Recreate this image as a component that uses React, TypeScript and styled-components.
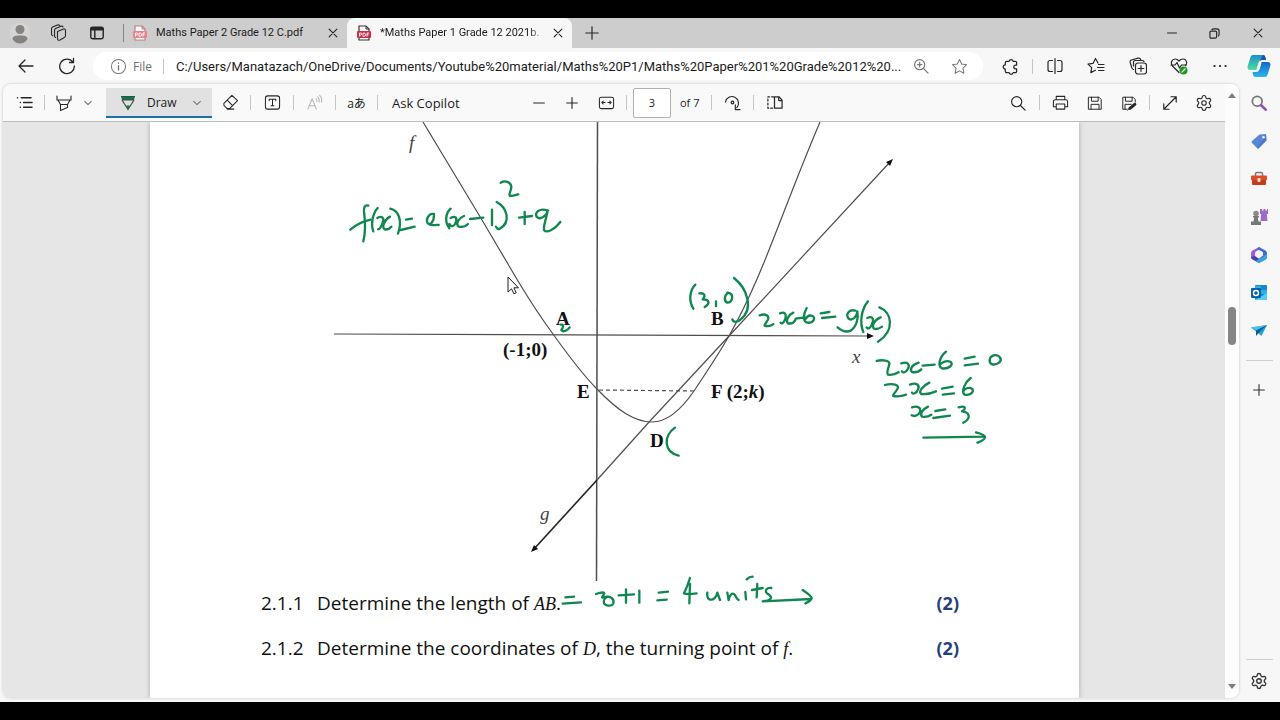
import React from 'react';
import styled, { createGlobalStyle, css } from 'styled-components';
import { Settings } from 'lucide-react';

const ui = '"Open Sans", "Noto Sans", "Noto Sans CJK JP", sans-serif';
const compact = 'Roboto, "Open Sans", sans-serif';
const serif = '"Liberation Serif", "Times New Roman", serif';

const GlobalStyle = createGlobalStyle`
  * { box-sizing: border-box; }
  body { margin: 0; background: #000; font-family: ${ui}; color: #1b1b1b; }
  button, input { font: inherit; color: inherit; }
`;

const Screen = styled.div`
  display: flex;
  flex-direction: column;
  height: 100vh;
  min-height: 480px;
  padding: 18px 0;
  background: #000;
  overflow: hidden;
`;

const TabStrip = styled.header`
  display: flex;
  flex: none;
  height: 30px;
  background: #cdcdcd;
`;

const IconButton = styled.button<{ $w: number; $dim?: boolean }>`
  display: flex;
  align-items: center;
  justify-content: center;
  flex: none;
  width: ${(p) => p.$w}px;
  height: 100%;
  padding: 0;
  border: 0;
  background: none;
  color: ${(p) => (p.$dim ? '#b4b4b4' : '#262626')};
`;

const Separator = styled.span`
  flex: none;
  align-self: center;
  width: 1px;
  height: 15px;
  margin: 0 2px;
  background: #c4c4c4;
`;

const TabDivider = styled.span`
  flex: none;
  align-self: center;
  width: 1px;
  height: 18px;
  margin: 0 2px 0 5px;
  background: #858585;
`;

const Tab = styled.div<{ $active?: boolean }>`
  display: flex;
  align-items: center;
  flex: 0 1 ${(p) => (p.$active ? 225 : 221)}px;
  min-width: 0;
  padding: 0 4px 0 ${(p) => (p.$active ? 9 : 6)}px;
  font-family: ${compact};
  font-size: 11px;
  ${(p) =>
    p.$active &&
    css`
      background: #f7f7f7;
      border-radius: 8px 8px 0 0;
    `}
`;

const TabTitle = styled.span<{ $fade?: boolean }>`
  flex: 1;
  min-width: 0;
  margin-left: 8px;
  overflow: hidden;
  white-space: nowrap;
  line-height: 30px;
  ${(p) =>
    p.$fade &&
    css`
      mask-image: linear-gradient(90deg, #000 88%, transparent);
    `}
`;

const Spacer = styled.div`
  flex: 1;
`;

const Body = styled.div`
  display: flex;
  flex: 1;
  min-height: 0;
  background: #f7f7f7;
`;

const Main = styled.div`
  display: flex;
  flex-direction: column;
  flex: 1;
  min-width: 0;
`;

const AddressRow = styled.div`
  display: flex;
  align-items: center;
  flex: none;
  height: 36px;
  padding-left: 6px;
`;

const AddressBox = styled.div`
  display: flex;
  align-items: center;
  flex: 1;
  min-width: 0;
  height: 28px;
  margin: 0 7px 0 5px;
  padding: 0 5px 0 17px;
  border-radius: 14px;
  background: #fff;
  font-size: 12px;
`;

const Scheme = styled.span`
  padding: 0 9px 0 6px;
  color: #6e6e6e;
`;

const AddressInput = styled.input`
  flex: 1;
  min-width: 0;
  height: 24px;
  margin-left: 10px;
  padding: 0;
  border: 0;
  outline: 0;
  background: none;
  font-family: ${compact};
  font-size: 13px;
`;

const Panel = styled.div`
  display: flex;
  flex: 1;
  min-height: 0;
  margin: 0 1px 4px 3px;
  border-radius: 8px;
  overflow: hidden;
  background: #f9f9f9;
  box-shadow: 0 0 2px 1px #dedede;
`;

const Document = styled.div`
  display: flex;
  flex-direction: column;
  flex: 1;
  min-width: 0;
`;

const Toolbar = styled.div`
  display: flex;
  align-items: center;
  flex: none;
  height: 38px;
  padding: 0 5px 0 4px;
  border-bottom: 1px solid #bcbcbc;
  font-size: 12px;
`;

const DrawButton = styled.button`
  display: flex;
  align-items: center;
  width: 106px;
  height: 30px;
  margin-left: 11px;
  padding: 0 10px 0 14px;
  border: 0;
  box-shadow: inset 0 -2px #1a6fae;
  background: #e1e1e1;
`;

const DrawLabel = styled.span`
  flex: 1;
  padding-left: 11px;
  text-align: left;
`;

const TextButton = styled.button`
  width: 91px;
  padding: 0 0 0 12px;
  border: 0;
  background: none;
  font-size: 13px;
  text-align: left;
`;

const ZoomGroup = styled.div`
  display: flex;
  align-items: center;
  height: 100%;
  margin-left: 52px;
`;

const PageInput = styled.input`
  width: 38px;
  height: 30px;
  margin: 0 0 0 4px;
  padding: 0;
  border: 1px solid #b0b0b0;
  border-radius: 2px;
  background: #fff;
  font-size: 11px;
  text-align: center;
`;

const PageCount = styled.span`
  width: 38px;
  padding-left: 9px;
  font-size: 11px;
`;

const Viewer = styled.div`
  flex: 1;
  min-height: 0;
  padding: 0 146px 0 147px;
  background: #e6e6e6;
  overflow: hidden;
`;

const Sheet = styled.main`
  height: 100%;
  background: #fff;
  box-shadow: 0 0 5px #a8a8a8;
`;

const SheetContent = styled.div`
  position: relative;
  max-width: 929px;
  margin: 0 auto;
`;

const Figure = styled.svg`
  display: block;
  width: 100%;
  height: 459px;
`;

const InkLayer = styled.svg`
  position: absolute;
  top: 0;
  left: 0;
  width: 100%;
  height: 576px;
  pointer-events: none;
`;

const Question = styled.div`
  display: grid;
  grid-template-columns: 56px 1fr auto;
  padding: 0 120px 0 111px;
  font-size: 19px;
  line-height: 45px;
  color: #111;
`;

const QuestionText = styled.p`
  margin: 0;
  white-space: nowrap;
`;

const Variable = styled.i`
  font-family: ${serif};
  font-size: 18px;
  line-height: 1;
`;

const Marks = styled.strong`
  font-size: 18px;
  color: #24407c;
`;

const ScrollTrack = styled.div`
  display: flex;
  flex-direction: column;
  align-items: center;
  flex: none;
  width: 14px;
  background: #fdfdfd;
`;

const ScrollThumb = styled.div`
  width: 8px;
  height: 38px;
  border-radius: 4px;
  background: #868686;
`;

const ScrollGap = styled.div<{ $share: number }>`
  flex: ${(p) => p.$share};
`;

const Sidebar = styled.nav`
  display: flex;
  flex-direction: column;
  align-items: center;
  flex: none;
  width: 40px;
  padding: 0 2px 2px 0;
`;

const SideButton = styled.button<{ $h?: number }>`
  display: flex;
  align-items: center;
  justify-content: center;
  flex: none;
  width: 38px;
  height: ${(p) => p.$h ?? 38}px;
  padding: 0;
  border: 0;
  background: none;
  color: #333;
`;

const SideRule = styled.hr`
  flex: none;
  width: 27px;
  height: 1px;
  margin: 10px 0;
  border: 0;
  background: #cfcfcf;
`;

const BottomRule = styled(SideRule)`
  margin: 0 0 2px;
`;

type IconProps = { size?: number; w?: number; children: React.ReactNode; color?: string };

const Icon = ({ size = 18, w = 1.1, color = 'currentColor', children }: IconProps) => (
  <svg
    width={size}
    height={size}
    viewBox="0 0 18 18"
    fill="none"
    stroke={color}
    strokeWidth={w}
    strokeLinecap="round"
    strokeLinejoin="round"
    aria-hidden="true"
  >
    {children}
  </svg>
);

const Chevron = () => (
  <Icon size={10} w={2} color="#777">
    <path d="M3 6l6 6 6-6" />
  </Icon>
);

const Cross = ({ size = 10 }: { size?: number }) => (
  <Icon size={size} w={2}>
    <path d="M2 2l14 14M16 2L2 16" />
  </Icon>
);

const PdfIcon = ({ pale }: { pale?: boolean }) => (
  <svg width="16" height="16" viewBox="0 0 16 16" aria-hidden="true">
    <path d="M3 1h7l3 3v11H3z" fill="#fff" stroke={pale ? '#b97f84' : '#3a3035'} strokeWidth="1.2" />
    <path d="M10 1v3h3" fill="none" stroke={pale ? '#b97f84' : '#3a3035'} />
    <rect x="1" y="6" width="14" height="7" rx="1" fill={pale ? '#e9808a' : '#cf2f42'} />
    <path
      d="M3.5 11.5V8h1.200a1 1 0 0 1 0 2H3.5M7 8v3.5h.8a1.700 1.700 0 0 0 0-3.5zM11 11.5V8h2M11 9.700h1.5"
      fill="none"
      stroke="#fff"
      strokeWidth=".9"
    />
  </svg>
);

const StarPath = 'M9 1.500l2.300 4.900 5.200.7-3.800 3.700.9 5.300L9 13.600l-4.600 2.500.9-5.300L1.500 7.100l5.200-.7z';

const Tabs = () => (
  <TabStrip>
    <IconButton $w={40} aria-label="Profile">
      <svg width="22" height="22" viewBox="0 0 22 22" aria-hidden="true">
        <circle cx="11" cy="11" r="10.5" fill="#d6d4d1" />
        <circle cx="11" cy="7.5" r="4.5" fill="#858381" />
        <path d="M3.5 17c0-3 3-3.500 7.500-3.500s7.500.5 7.500 3.500c-1.500 3-4.500 4.500-7.500 4.500S5 20 3.500 17z" fill="#858381" />
      </svg>
    </IconButton>
    <IconButton $w={36} aria-label="Workspaces">
      <Icon>
        <path d="M8.500 7.500l6-2.500q2-.5 2 1.500v5q0 1.500-1.500 2.200l-4 2.300q-2.500 1-2.500-1.500z" />
        <path d="M6.500 13.500q-1-.5-1-2v-5q0-1.500 1.500-2.200l5-2q1.500-.5 2 .7" />
        <path d="M3.700 11.800Q2.500 11.500 2.500 10V5q0-1.500 1.500-2.200L8.500 1q1.500-.5 2.200.5" />
      </Icon>
    </IconButton>
    <IconButton $w={42} aria-label="Tab actions">
      <Icon size={16} w={1.6}>
        <rect x="2" y="2.5" width="14" height="13" rx="2" />
        <path d="M3 4.500h12" strokeWidth="3.5" />
        <path d="M6.500 5v10" />
      </Icon>
    </IconButton>
    <TabDivider />
    <Tab>
      <PdfIcon pale />
      <TabTitle>Maths Paper 2 Grade 12 C.pdf</TabTitle>
      <IconButton $w={20} aria-label="Close tab">
        <Cross />
      </IconButton>
    </Tab>
    <Tab $active>
      <PdfIcon />
      <TabTitle $fade>*Maths Paper 1 Grade 12 2021b.</TabTitle>
      <IconButton $w={20} aria-label="Close tab">
        <Cross />
      </IconButton>
    </Tab>
    <IconButton $w={40} aria-label="New tab">
      <Icon size={14} w={1.5}>
        <path d="M9 1v16M1 9h16" />
      </Icon>
    </IconButton>
    <Spacer />
    <IconButton $w={43} aria-label="Minimise">
      <Icon size={10} w={2}>
        <path d="M1 9h16" />
      </Icon>
    </IconButton>
    <IconButton $w={43} aria-label="Restore">
      <Icon size={11} w={1.9}>
        <rect x="1.5" y="5" width="11" height="11.5" rx="2" />
        <path d="M5 2.500c1-1 2-1 3-1h5c2.500 0 3.500 1 3.500 3.500v5c0 1.500 0 2-1 3" />
      </Icon>
    </IconButton>
    <IconButton $w={44} aria-label="Close window">
      <Cross />
    </IconButton>
  </TabStrip>
);

const Address = () => (
  <AddressRow>
    <IconButton $w={40} aria-label="Back">
      <Icon w={1.3}>
        <path d="M16 9H2M8 3L2 9l6 6" />
      </Icon>
    </IconButton>
    <IconButton $w={42} aria-label="Refresh">
      <Icon w={1.3}>
        <path d="M15 5.200A7.300 7.300 0 1 0 16.300 9M15.500 1.500v4h-4" />
      </Icon>
    </IconButton>
    <AddressBox>
      <Icon size={17} color="#777">
        <circle cx="9" cy="9" r="7.5" />
        <path d="M9 8.200v4.500M9 5.300v.3" strokeWidth="1.4" />
      </Icon>
      <Scheme>File</Scheme>
      <Separator />
      <AddressInput
        aria-label="Address"
        readOnly
        value="C:/Users/Manatazach/OneDrive/Documents/Youtube%20material/Maths%20P1/Maths%20Paper%201%20Grade%2012%20..."
      />
      <IconButton $w={38} aria-label="Zoom">
        <Icon size={16} color="#777" w={1.3}>
          <circle cx="7.5" cy="7.5" r="5.7" />
          <path d="M11.800 11.800L17 17M7.500 5v5M5 7.500h5" />
        </Icon>
      </IconButton>
      <IconButton $w={38} aria-label="Add to favourites">
        <Icon size={17} color="#777">
          <path d={StarPath} />
        </Icon>
      </IconButton>
    </AddressBox>
    <IconButton $w={40} aria-label="Extensions">
      <Icon size={17} w={1.3}>
        <path d="M5 3.500h2.500a2.200 2.200 0 0 1 4.300 0H14a1.500 1.500 0 0 1 1.500 1.500v2.500h-1a2 2 0 0 0 0 4h1V14a1.500 1.500 0 0 1-1.500 1.500h-2.200a2.200 2.200 0 0 1-4.300 0H5A1.500 1.500 0 0 1 3.500 14v-2.300a2.200 2.200 0 0 1 0-4.400V5A1.500 1.500 0 0 1 5 3.500z" />
      </Icon>
    </IconButton>
    <Separator />
    <IconButton $w={40} aria-label="Split screen">
      <Icon w={1.2}>
        <path d="M9 1.500v15M6.500 3.500H4A2 2 0 0 0 2 5.500v7a2 2 0 0 0 2 2h2.500M11.500 3.500H14a2 2 0 0 1 2 2v7a2 2 0 0 1-2 2h-2.500" />
      </Icon>
    </IconButton>
    <IconButton $w={42} aria-label="Favourites">
      <Icon w={1.2}>
        <path d="M11 6L8.500 1.500 6 6.400l-5 .7 3.700 3.500-.9 5 4.700-2.400M11.500 7.500H17M10.500 10.500H17M11.500 13.500H17" />
      </Icon>
    </IconButton>
    <IconButton $w={41} aria-label="Collections">
      <Icon w={1.2}>
        <rect x="6.5" y="6" width="11" height="11" rx="2.5" />
        <path d="M12 8.700v5.600M9.200 11.500h5.600M4.500 12.500Q3 12 2.700 10.500L1.200 5.500q-.5-2 1.300-2.500L9 1.200q2-.5 2.700 1.300l.3 1M4.500 9V5.500q0-2 2-2H13q1.500 0 2 1" />
      </Icon>
    </IconButton>
    <IconButton $w={41} aria-label="Browser essentials">
      <Icon w={1.2}>
        <path d="M9 15.500L2.500 9C0 5.500 2 2 5 2c2 0 3 .8 4 2 1-1.200 2-2 4-2 3 0 5 3.500 2.500 6.500" />
        <path d="M1 8h4l2-2.500 2.500 5.500L11.500 8H16" />
        <circle cx="13.5" cy="13.5" r="4" fill="#1b9a1f" stroke="none" />
        <path d="M12 15l3-3" stroke="#fff" />
      </Icon>
    </IconButton>
    <IconButton $w={41} aria-label="More">
      <Icon>
        <path d="M3.500 9h.1M9 9h.1M14.500 9h.1" strokeWidth="2.2" />
      </Icon>
    </IconButton>
  </AddressRow>
);

const PdfToolbar = () => (
  <Toolbar>
    <IconButton $w={35} aria-label="Contents">
      <Icon size={17} w={1.4}>
        <path d="M5.500 4H16M8 9h9M8 14h9M1.500 4h.2M4.500 9h.2M4.500 14h.2" />
      </Icon>
    </IconButton>
    <Separator />
    <IconButton $w={34} aria-label="Highlight">
      <Icon>
        <path d="M2 2v4h14V2M3 6l2.500 4.500h7L15 6M5.500 10.500v6l7-3v-3" />
      </Icon>
    </IconButton>
    <IconButton $w={14} aria-label="Highlight options">
      <Chevron />
    </IconButton>
    <DrawButton>
      <svg width="16" height="16" viewBox="0 0 16 16" aria-hidden="true">
        <path d="M1 1h14l-1 4H2z" fill="#12764b" />
        <path d="M1 1.500h14M2 5l6 9.500L14 5" fill="none" stroke="#3b4a43" strokeWidth="1.2" />
        <path d="M6 10.500h4l-2 4z" fill="#12764b" />
        <path d="M2 5h12" stroke="#3b4a43" />
      </svg>
      <DrawLabel>Draw</DrawLabel>
      <Chevron />
    </DrawButton>
    <IconButton $w={36} aria-label="Erase">
      <Icon size={17}>
        <path d="M2 10l8.500-8.500 6 5.500L8 15.500H5.500L2 12zM5.500 6.500l6 6M5.500 16h7" />
      </Icon>
    </IconButton>
    <Separator />
    <IconButton $w={38} aria-label="Add text">
      <Icon size={17}>
        <rect x="1.5" y="2" width="15" height="14" rx="2.5" />
        <path d="M5.500 7V5.500h7V7M9 5.500v7M7.500 12.500h3" />
      </Icon>
    </IconButton>
    <Separator />
    <IconButton $w={37} $dim aria-label="Read aloud">
      <Icon size={17}>
        <path d="M2 16L6.500 5 11 16M3.500 12.500h6M10.500 4.500c1 1 1.200 2 1 3.500M12.500 3c1.500 1.500 2 3.500 1.500 5.500M14.500 1.500c2 2 2.500 4.500 2 7" />
      </Icon>
    </IconButton>
    <Separator />
    <IconButton $w={37} aria-label="Translate">
      aあ
    </IconButton>
    <Separator />
    <TextButton>Ask Copilot</TextButton>
    <ZoomGroup>
      <IconButton $w={32} aria-label="Zoom out">
        <Icon size={12} w={1.7}>
          <path d="M1 9h16" />
        </Icon>
      </IconButton>
      <IconButton $w={34} aria-label="Zoom in">
        <Icon size={12} w={1.7}>
          <path d="M1 9h16M9 1v16" />
        </Icon>
      </IconButton>
      <IconButton $w={35} aria-label="Fit to width">
        <Icon size={17}>
          <rect x="1.5" y="3.5" width="15" height="12" rx="2" />
          <path d="M4 9h3.500M14 9h-3.500M5.500 7.500L4 9l1.500 1.500M12.500 7.500L14 9l-1.500 1.500" />
        </Icon>
      </IconButton>
      <Separator />
      <PageInput aria-label="Page" defaultValue="3" />
      <PageCount>of 7</PageCount>
      <Separator />
      <IconButton $w={37} aria-label="Rotate">
        <Icon size={17} w={1.2}>
          <path d="M1.500 8.500a7 7 0 1 1 12 6M12 11.500v5h5" />
          <circle cx="9" cy="9" r="1.4" />
        </Icon>
      </IconButton>
      <Separator />
      <IconButton $w={36} aria-label="Page view">
        <Icon size={17} w={1.3}>
          <path d="M9 3h5l3 3.500V15H9zM13.500 3v4H17" />
          <path d="M8 3H2v12h6" strokeDasharray="2 2.2" />
        </Icon>
      </IconButton>
    </ZoomGroup>
    <Spacer />
    <IconButton $w={38} aria-label="Find">
      <Icon size={16} w={1.3}>
        <circle cx="7.5" cy="7.5" r="5.7" />
        <path d="M11.800 11.800L17 17" />
      </Icon>
    </IconButton>
    <Separator />
    <IconButton $w={36} aria-label="Print">
      <Icon size={17}>
        <path d="M4.500 6V2.500h9V6M4.500 13.500H1.500v-5.500a2 2 0 0 1 2-2h11a2 2 0 0 1 2 2v5.500h-3M4.500 10.500h9V16h-9z" />
      </Icon>
    </IconButton>
    <IconButton $w={33} aria-label="Save">
      <Icon size={16}>
        <path d="M2 2.500h11.500L16 5v11H2zM5 2.500v4.500h7.500V2.500M4.500 16v-5.500h9V16" />
      </Icon>
    </IconButton>
    <IconButton $w={36} aria-label="Save as">
      <Icon size={16}>
        <path d="M7 16H2V2.500h11.500L16 5v3M5 2.500v4.500h7.500V2.500M4.500 16v-5.500h7" />
        <path d="M10 15l5.500-4.500" strokeWidth="3.5" />
        <path d="M7.500 17l2-2" />
      </Icon>
    </IconButton>
    <Separator />
    <IconButton $w={36} aria-label="Full screen">
      <Icon size={16} w={1.3}>
        <path d="M2 16L16 2M10 2h6v6M2 10v6h6" />
      </Icon>
    </IconButton>
    <IconButton $w={32} aria-label="Settings">
      <Settings size={18} strokeWidth={1.5} />
    </IconButton>
  </Toolbar>
);

const GraphFigure = () => (
  <Figure viewBox="150 122 929 459" role="img" aria-label="Graphs of f and g">
    <g fill="none" stroke="#4e4e4e" strokeWidth="1.2">
      <path d="M334 334L872 336" />
      <path d="M597.5 122L596.5 581" strokeWidth="1.5" />
      <path d="M423 122L482 220L518 281Q536 311 553 334C568 355 583 375 597 389C618 411 635 422 652 422C668 422 683 407 694 391C706 373 718 355 729 336C764 274 780 216 820 122" />
      <path d="M650 421L729 336L890 162" />
      <path d="M599 390L694 391" strokeDasharray="4 3" />
      <path d="M534 549L597 480" strokeWidth="1.6" stroke="#222" />
      <path d="M597 480L650 421" />
    </g>
    <g fill="#111">
      <path d="M874 336l-7-3v6zM893 159l-7 3 4 4zM531 552l7-3-4-4z" />
      <g fontFamily={serif} fontSize="19" fontWeight="bold">
        <text x="556" y="325">A</text>
        <text x="503" y="356">(-1;0)</text>
        <text x="577" y="398">E</text>
        <text x="711" y="325">B</text>
        <text x="711" y="398">
          F (2;<tspan fontStyle="italic">k</tspan>)
        </text>
        <text x="650" y="447">D</text>
      </g>
      <g fontFamily={serif} fontSize="19" fontStyle="italic" fill="#444">
        <text x="409" y="149">f</text>
        <text x="540" y="520">g</text>
        <text x="852" y="363">x</text>
      </g>
    </g>
  </Figure>
);

/* Pen annotations; each group is sketched on a grid three times finer than the sheet. */
const PenStrokes = () => (
  <InkLayer viewBox="150 122 929 576" aria-hidden="true">
    <g fill="none" stroke="#10874f" strokeWidth="7" strokeLinecap="round" strokeLinejoin="round">
      <g transform="translate(330 120) scale(.33333)">
        <path d="M115 257C104 253 101 262 102 275C106 305 106 340 100 364M61 329C76 316 98 304 122 299" />
        <path d="M143 264C128 280 122 312 130 334" />
        <path d="M142 294C156 286 164 294 158 308C154 320 150 328 144 328M180 290C164 298 154 322 164 328C172 330 180 325 184 320" />
        <path d="M181 266C206 272 218 300 204 341M228 299L246 296M212 330L254 320" />
        <path d="M312 282C296 278 288 298 292 308C302 320 312 302 312 286M296 312C306 318 312 314 326 315" />
        <path d="M362 266C346 280 344 306 358 325M362 294C380 284 382 298 376 310C372 320 362 322 358 312M402 288C386 294 376 312 386 320C398 322 408 318 414 312" />
        <path d="M420 297L460 293M486 269L486 315M500 246C530 262 546 306 508 327C502 328 500 324 498 320" />
        <path d="M512 188C526 180 542 186 544 200C544 214 534 222 540 228C548 228 558 225 565 223" />
        <path d="M584 276L584 312M567 293L606 288" />
        <path d="M654 272C628 262 614 278 620 290C630 302 648 288 652 276C648 300 640 316 642 330C650 342 676 326 691 306" />
        <path d="M692 614C704 612 698 624 694 630C700 638 712 632 719 622" />
      </g>
      <g transform="translate(660 260) scale(.33333)">
        <path d="M106 74C88 92 86 124 100 146M118 100C134 98 138 108 128 118C148 118 152 130 134 141M168 124L168 138M204 98C194 106 190 124 202 128C216 128 222 108 210 100L202 98" />
        <path d="M222 54C262 86 282 146 242 178C232 188 220 188 217 178" />
        <path d="M299 166C316 160 328 166 324 178C320 188 312 194 314 197C322 200 334 198 340 192M360 160C374 154 380 162 376 176C372 190 364 192 362 188M400 158C386 164 376 182 384 190C394 192 402 188 406 180" />
        <path d="M407 176L434 172M440 144C430 162 428 186 442 188C460 190 468 174 458 168C448 164 440 170 436 178M482 160L508 156M486 174L526 170" />
        <path d="M586 152C566 146 556 164 566 176C578 184 592 168 592 154C596 174 590 200 572 212C558 218 542 210 533 202" />
        <path d="M624 124C604 148 598 188 610 216M622 174C640 166 642 180 636 192C632 206 622 208 620 202M662 172C644 178 634 198 642 206C652 210 660 204 666 200M658 142C696 156 706 212 654 245" />
        <path d="M650 303C668 298 690 302 688 312C686 324 678 336 684 344C692 345 708 342 716 337M724 310C744 304 750 314 744 326C738 338 728 340 726 334M776 308C756 314 748 328 756 336C766 338 776 336 784 328" />
        <path d="M788 317L824 314M858 275C838 292 832 318 846 325C866 328 882 314 872 306C860 300 846 306 840 314M914 296L944 290M914 316L954 311M1004 286C988 286 984 306 996 313C1012 316 1028 304 1020 292C1014 284 1004 284 994 290" />
        <path d="M675 375C692 370 714 372 714 382C712 396 696 402 700 408C712 410 728 408 738 404M750 374C770 366 780 376 774 388C770 400 758 404 756 398M808 368C788 378 774 394 784 402C798 404 814 400 828 394" />
        <path d="M846 386L878 380M848 404L882 400M932 354C916 366 902 394 914 404C932 408 944 394 936 386C926 380 914 386 910 394" />
        <path d="M756 442C774 436 784 444 780 456C774 468 762 470 755 466M804 440C788 448 778 462 786 470C798 472 808 468 814 464M826 453L856 448M820 474L870 467M896 442C914 436 922 444 906 454C930 456 934 476 910 488" />
        <path d="M790 533L970 530M948 517C960 520 976 526 975 532C974 540 962 544 952 548" />
      </g>
      <g transform="translate(500 330) scale(.33333)">
        <path d="M525 293C490 318 490 366 536 377" />
      </g>
      <g transform="translate(540 560) scale(.33333)">
        <path d="M76 112L102 110M68 131L123 127M168 102C184 96 196 96 192 102C188 110 182 114 190 112C210 106 224 116 220 130C216 140 196 138 192 130C190 120 196 112 204 110M258 88L258 128M236 106L282 103M298 92L298 128" />
        <path d="M356 98L384 95M352 121L380 119M450 54C444 74 436 92 432 100C442 104 456 102 470 100M450 72L448 130" />
        <path d="M502 98C500 114 506 122 518 118C526 114 530 106 532 98L540 120M562 98L566 120C568 104 578 96 584 104C588 110 590 118 596 120M616 96L618 118M620 58C626 52 630 50 638 50M652 72L650 112M636 90L668 84" />
        <path d="M694 84C678 82 672 96 684 102C700 112 694 122 668 124L814 117M788 90C800 98 814 108 815 114C814 122 804 126 796 130" />
      </g>
    </g>
    <path
      d="M508 277v15l3.500-3.200 2.400 5 2.300-1-2.300-5h4.600z"
      fill="#fff"
      stroke="#222"
      strokeWidth="1"
    />
  </InkLayer>
);

const ScrollArrow = ({ up }: { up?: boolean }) => (
  <svg width="14" height="24" viewBox="0 0 14 24" aria-hidden="true">
    <path d={up ? 'M3 14h8l-4-5z' : 'M3 10h8l-4 5z'} fill="#7d7d7d" />
  </svg>
);

const CopilotIcon = () => (
  <svg width="24" height="24" viewBox="0 0 24 24" aria-hidden="true">
    <defs>
      <linearGradient id="copilotLeft" x1="0" y1="0" x2="0" y2="1">
        <stop offset="0" stopColor="#1c8fd0" />
        <stop offset="1" stopColor="#4fdc9a" />
      </linearGradient>
      <linearGradient id="copilotRight" x1="0" y1="0" x2="0" y2="1">
        <stop offset="0" stopColor="#1766c8" />
        <stop offset="1" stopColor="#27b8f0" />
      </linearGradient>
    </defs>
    <path d="M6 1h10c2 0 2.500 2 3 5h-4c-2 0-3 1-3.500 3l-2 7H3c-2 0-3-2-2.300-4l2.500-8C3.800 2 4.500 1 6 1z" fill="url(#copilotLeft)" />
    <path d="M18 23H8.500c-2 0-2.500-2-3-5H9c2 0 3-1 3.500-3l2-7H21c2 0 3 2 2.300 4l-2.500 8c-.6 2-1.300 3-2.800 3z" fill="url(#copilotRight)" />
    <path d="M16 1c2 0 2.500 2 3 5h-4c-1.500 0-2.500.7-3 2z" fill="#1a52b0" />
    <path d="M12 8.500h2.500l-2 7H9.500z" fill="#f7f7f7" />
  </svg>
);

const AppBar = () => (
  <Sidebar aria-label="Apps">
    <SideButton $h={36} aria-label="Copilot">
      <CopilotIcon />
    </SideButton>
    <SideButton aria-label="Search">
      <Icon size={16} w={2} color="#777">
        <circle cx="7" cy="7" r="5.5" />
        <path d="M11.500 11.500l5 5" stroke="#8c55b8" strokeWidth="3" />
      </Icon>
    </SideButton>
    <SideButton aria-label="Shopping">
      <svg width="16" height="16" viewBox="0 0 16 16" aria-hidden="true">
        <path d="M8.500 1.500L15 1l.5 6.500L8 15q-1 1-2 0L1 10q-1-1 0-2z" fill="#5b87d8" />
        <path d="M15 1l.5 6.500L8 15q-1 1-2 0z" fill="#4069bd" opacity=".5" />
        <circle cx="12.5" cy="4.3" r="1.3" fill="#e8efff" />
      </svg>
    </SideButton>
    <SideButton aria-label="Tools">
      <svg width="18" height="16" viewBox="0 0 18 16" aria-hidden="true">
        <path d="M5.500 5V3q0-1.500 1.500-1.500h4q1.500 0 1.500 1.500v2" fill="none" stroke="#777" strokeWidth="1.5" />
        <path d="M2 8h14v5q0 1-1 1H3q-1 0-1-1z" fill="#c43c1c" />
        <path d="M1 5.500q0-1 1-1h14q1 0 1 1V9H1z" fill="#dc4c26" />
        <rect x="7.5" y="7" width="3" height="4" rx="1" fill="#ffe1d0" />
      </svg>
    </SideButton>
    <SideButton aria-label="Games">
      <svg width="18" height="18" viewBox="0 0 18 18" aria-hidden="true">
        <path d="M10 1h2v1.500h1.500V1h2v1.500H17V1h1v5h-1.200l.7 7H10.500l.7-7H10z" fill="#a06acb" />
        <circle cx="6" cy="5.5" r="2.8" fill="#8b8b8b" />
        <path d="M3 8h6v1.500H7.800l.7 4H11V17H1v-3.500h2.500l.7-4H3z" fill="#777" />
      </svg>
    </SideButton>
    <SideButton aria-label="Microsoft 365">
      <svg width="18" height="18" viewBox="0 0 18 18" aria-hidden="true">
        <path d="M9 1L2.500 4.500Q1 5.500 1 7v4l4 2.500V7q0-1 1-1.500l5-3z" fill="#9a62d6" />
        <path d="M9 1l6.500 3.500Q17 5.500 17 7v4.500l-4-2V7q0-1-1-1.500L7 3z" fill="#3d6fc9" />
        <path d="M1 11q0 1.500 1.500 2.500L9 17l6.500-3.500Q17 12.500 17 11l-4-1.500-4 3.200L5 10z" fill="#4a3fb0" />
        <path d="M17 8v3q0 1.500-1.500 2.500L9 17l-3-2 7-4.500z" fill="#38a5dc" />
      </svg>
    </SideButton>
    <SideButton aria-label="Outlook">
      <svg width="16" height="16" viewBox="0 0 16 16" aria-hidden="true">
        <rect x="4" y="0" width="12" height="15" rx="1" fill="#1c85cf" />
        <path d="M4 1h6v4H4zM10 5h6v4h-6z" fill="#2cb0ec" />
        <path d="M4 15L16 8v7z" fill="#4fd0f5" />
        <rect x="0" y="3" width="10" height="10" rx="1" fill="#0a63a8" />
        <circle cx="5" cy="8" r="2.5" fill="none" stroke="#fff" strokeWidth="1.4" />
      </svg>
    </SideButton>
    <SideButton aria-label="Drop">
      <svg width="16" height="16" viewBox="0 0 16 16" aria-hidden="true">
        <path d="M0 4.500L16 2l-5.500 11z" fill="#27a0dc" />
        <path d="M16 2L5 7.500l-5-3z" fill="#46c0ef" />
        <path d="M16 2L5 7.500V13l2.500-3z" fill="#125a8c" />
      </svg>
    </SideButton>
    <SideRule />
    <SideButton aria-label="Add app">
      <Icon size={12} w={1.7}>
        <path d="M9 1v16M1 9h16" />
      </Icon>
    </SideButton>
    <Spacer />
    <BottomRule />
    <SideButton aria-label="Sidebar settings">
      <Settings size={18} strokeWidth={1.8} />
    </SideButton>
  </Sidebar>
);

export default function App() {
  return (
    <Screen>
      <GlobalStyle />
      <Tabs />
      <Body>
        <Main>
          <Address />
          <Panel>
            <Document>
              <PdfToolbar />
              <Viewer>
                <Sheet>
                  <SheetContent>
                    <GraphFigure />
                    <Question>
                      <span>2.1.1</span>
                      <QuestionText>
                        Determine the length of <Variable>AB</Variable>.
                      </QuestionText>
                      <Marks>(2)</Marks>
                    </Question>
                    <Question>
                      <span>2.1.2</span>
                      <QuestionText>
                        Determine the coordinates of <Variable>D</Variable>, the turning point of{' '}
                        <Variable>f</Variable>.
                      </QuestionText>
                      <Marks>(2)</Marks>
                    </Question>
                    <PenStrokes />
                  </SheetContent>
                </Sheet>
              </Viewer>
            </Document>
            <ScrollTrack>
              <ScrollArrow up />
              <ScrollGap $share={199} />
              <ScrollThumb />
              <ScrollGap $share={330} />
              <ScrollArrow />
            </ScrollTrack>
          </Panel>
        </Main>
        <AppBar />
      </Body>
    </Screen>
  );
}
